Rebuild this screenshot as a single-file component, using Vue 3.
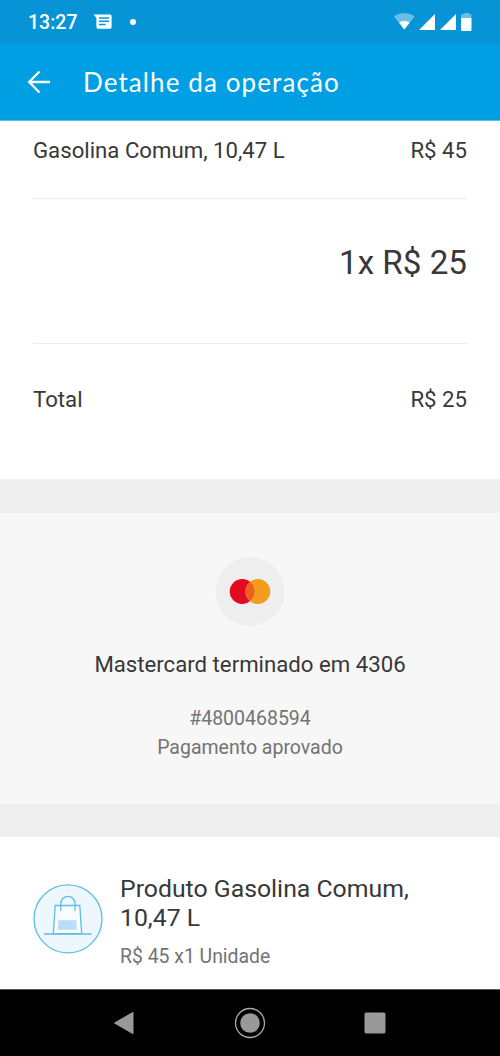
<script setup>
const payment = {
  card: 'Mastercard terminado em 4306',
  id: '#4800468594',
  status: 'Pagamento aprovado',
}
</script>

<template>
  <div class="screen">
    <div class="status">
      <span class="time">13:27</span>
      <svg class="message" width="20" height="18" viewBox="0 0 20 18">
        <path fill="#fff" fill-rule="evenodd" d="M.5 1.5H17.2Q18.6 1.5 18.6 3V14Q18.6 15.8 17.2 15.8H5.2Q3.4 15.8 3.4 14V5ZM6 4.2V5.7H16V4.2ZM6 7.5V9H16V7.5ZM6 10.8V12.3H12.6V10.8Z" />
      </svg>
      <span class="dot"></span>
      <svg class="signals" width="80" height="22" viewBox="0 0 80 22">
        <path fill="#fff" opacity=".4" d="M.8 5.2Q11.3-1.4 21.8 5.2L11.3 18.4Z" />
        <path fill="#fff" d="M6 11.4Q11.3 8.8 16.7 11.4L11.3 18.4Z" />
        <path fill="#fff" d="M42 3V19H26Z M63 3V19H47Z" />
        <path fill="#fff" opacity=".4" d="M71.5 2H76V3.2H78.3V7.2H68V3.2H71.5Z" />
        <path fill="#fff" d="M68 7H78.5V19Q78.5 20 77.5 20H69Q68 20 68 19Z" />
      </svg>
    </div>
    <header class="header">
      <svg width="26" height="26" viewBox="0 0 26 26" fill="none" stroke="#fff" stroke-width="2.3">
        <path d="M13.5 2.5L3.2 13L13.5 23.5M3.2 13H24" />
      </svg>
      <h1>Detalhe da operação</h1>
    </header>

    <section class="summary">
      <div class="row item"><span>Gasolina Comum, 10,47 L</span><span>R$ 45</span></div>
      <div class="installments">1x R$ 25</div>
      <div class="row total"><span>Total</span><span>R$ 25</span></div>
    </section>

    <section class="payment">
      <svg width="70" height="70" viewBox="0 0 70 70">
        <circle cx="35" cy="34.5" r="34.5" fill="#eee" />
        <circle cx="27.2" cy="34.5" r="12.5" fill="#e20a21" />
        <circle cx="42.8" cy="34.5" r="12.5" fill="#f59c1f" />
        <path fill="#e9611c" d="M35 24.8A12.5 12.5 0 0 1 35 44.2A12.5 12.5 0 0 1 35 24.8Z" />
      </svg>
      <p class="card">{{ payment.card }}</p>
      <p class="detail id">{{ payment.id }}</p>
      <p class="detail state">{{ payment.status }}</p>
    </section>

    <section class="product">
      <svg width="70" height="70" viewBox="0 0 70 70" fill="none" stroke="#5cbfe4" stroke-width="1.3">
        <circle cx="35" cy="34.8" r="34" fill="#eff7fe" />
        <path d="M22.2 21.5H46.8L48.7 49.7H20.3Z" fill="#f8fbff" />
        <path d="M25.5 36.2H43.2L43.8 45.8H24.8Z" fill="#b9dcf8" stroke="none" />
        <path d="M27.8 27V19.5A7.1 7.1 0 0 1 42 19.5V27M11 50H58.5" />
      </svg>
      <div class="info">
        <h2>Produto Gasolina Comum,<br />10,47 L</h2>
        <p>R$ 45 x1 Unidade</p>
      </div>
    </section>

    <nav class="nav">
      <svg width="24" height="24" viewBox="0 0 24 24"><path d="M1.5 12L20 1.3V22.7Z" fill="#999" stroke="#999" stroke-linejoin="round" /></svg>
      <svg width="32" height="32" viewBox="0 0 32 32"><circle cx="16" cy="16" r="14.5" fill="none" stroke="#aaa" stroke-width="1.3" /><circle cx="16" cy="16" r="9.8" fill="#999" /></svg>
      <svg width="24" height="24" viewBox="0 0 24 24"><rect x="1.5" y="1.5" width="21" height="21" rx="1.8" fill="#999" /></svg>
    </nav>
  </div>
</template>

<style>
body { margin: 0; }
</style>

<style scoped>
.screen {
  width: 500px;
  height: 1056px;
  overflow: hidden;
  display: flex;
  flex-direction: column;
  background: #fff;
  color: #383838;
  font-family: Roboto, "Liberation Sans", sans-serif;
}
.screen > * { box-sizing: border-box; flex-shrink: 0; }
h1, h2, p { margin: 0; font-weight: 400; }
svg { display: block; flex-shrink: 0; }
.status {
  height: 43px;
  display: flex;
  align-items: center;
  padding: 0 27px 0 28px;
  background: #0794d7;
  color: #fff;
}
.time { font-size: 19.5px; font-weight: 500; width: 49px; line-height: 24px; padding-top: 2px; white-space: nowrap; }
.message { margin-left: 16px; }
.dot { width: 6px; height: 6px; border-radius: 50%; background: #fff; margin-left: 17px; }
.signals { margin-left: auto; }
.header {
  height: 78px;
  display: flex;
  align-items: center;
  padding-left: 26px;
  background: #009ee3;
  border-bottom: 1px solid #55bfed;
  color: #fff;
}
.header h1 {
  font-family: Lato, "Open Sans", sans-serif;
  font-size: 26px;
  line-height: 36px;
  letter-spacing: 1.1px;
  margin-left: 31px;
  white-space: nowrap;
}
.summary { height: 358px; padding: 14px 33px 0; }
.row { display: flex; justify-content: space-between; font-size: 22.2px; line-height: 30px; }
.item { height: 64px; border-bottom: 1px solid #ececec; box-sizing: border-box; }
.installments {
  box-sizing: border-box;
  height: 145px;
  padding-top: 44px;
  border-bottom: 1px solid #ececec;
  font-size: 33.2px;
  line-height: 40px;
  text-align: right;
}
.total { padding-top: 40px; }
.payment {
  height: 358px;
  padding-top: 44px;
  border-top: 34px solid #efefef;
  border-bottom: 33px solid #efefef;
  background: #f7f7f7;
  display: flex;
  flex-direction: column;
  align-items: center;
}
.card { font-size: 22.2px; line-height: 30px; margin-top: 22px; }
.detail { font-size: 19.5px; line-height: 29px; color: #737373; }
.id { margin-top: 25px; }
.product { height: 152px; padding: 37px 33px 0; display: flex; }
.product > svg { margin-top: 10px; }
.info { margin-left: 17px; }
.info h2 { font-size: 24.8px; line-height: 29.3px; white-space: nowrap; }
.info p { font-size: 19.4px; line-height: 28px; margin-top: 10px; color: #737373; }
.nav {
  height: 67px;
  padding: 0 113px;
  background: #000;
  border-top: 1px solid #555;
  display: flex;
  align-items: center;
  justify-content: space-between;
}
</style>
